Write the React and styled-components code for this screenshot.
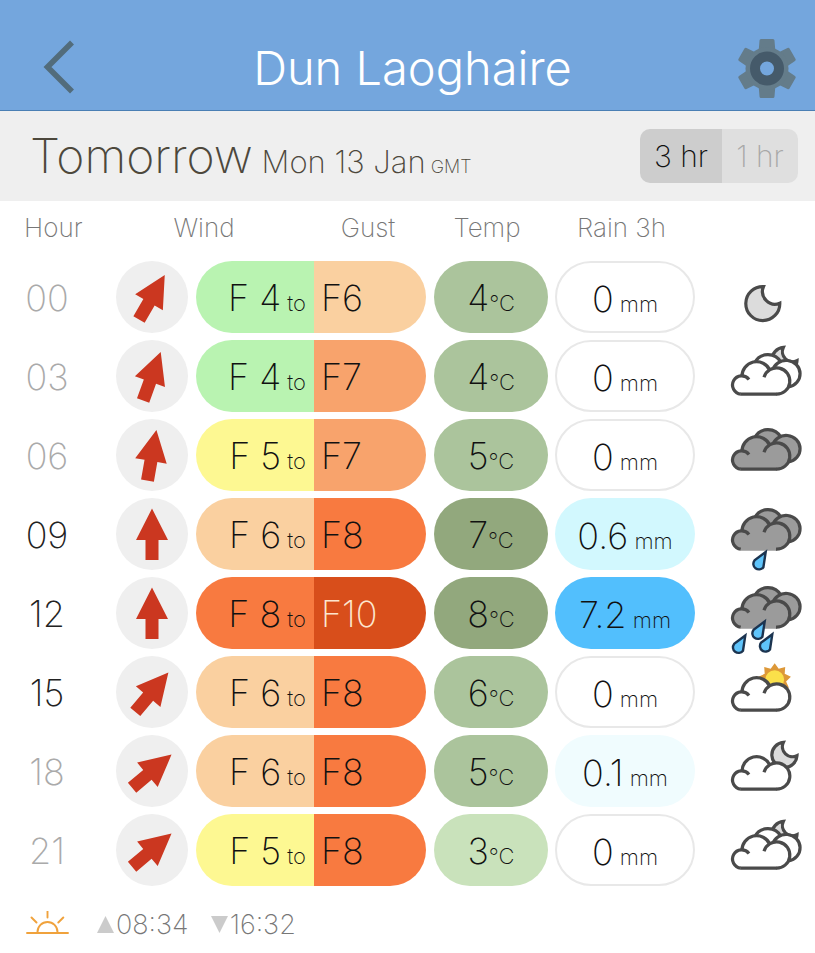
import React, { useState } from "react";
import styled, { createGlobalStyle } from "styled-components";

const WIND_COLORS = {
  4: "#b9f3b1",
  5: "#fdf892",
  6: "#fad0a0",
  7: "#f8a36c",
  8: "#f87a40",
  10: "#d84e1b",
};

const hours = [
  { hour: "00", angle: 30, wind: 4, gust: 6, temp: 4, tempColor: "#abc49c", rain: "0", sky: "moon" },
  { hour: "03", angle: 20, wind: 4, gust: 7, temp: 4, tempColor: "#abc49c", rain: "0", sky: "cloudsMoon" },
  { hour: "06", angle: 10, wind: 5, gust: 7, temp: 5, tempColor: "#abc49c", rain: "0", sky: "overcast" },
  { hour: "09", day: true, angle: 0, wind: 6, gust: 8, temp: 7, tempColor: "#92a87d", rain: "0.6", rainColor: "#d2f8fe", sky: "lightRain" },
  { hour: "12", day: true, angle: 0, wind: 8, gust: 10, temp: 8, tempColor: "#92a87d", rain: "7.2", rainColor: "#52bffd", sky: "heavyRain" },
  { hour: "15", day: true, angle: 40, wind: 6, gust: 8, temp: 6, tempColor: "#abc49c", rain: "0", sky: "cloudSun" },
  { hour: "18", angle: 50, wind: 6, gust: 8, temp: 5, tempColor: "#abc49c", rain: "0.1", rainColor: "#f0fcfe", sky: "cloudMoon" },
  { hour: "21", angle: 50, wind: 5, gust: 8, temp: 3, tempColor: "#c9e2bb", rain: "0", sky: "cloudsMoon" },
];

const INK = "#4a4a4a";

const FrontCloud = ({ fill = "#fff", open }) => (
  <g>
    <path
      d="M12 15A14.5 14.5 0 0 1 40 9A13.2 13.2 0 1 1 46 33.2H10.8A9.2 9.2 0 0 1 12 15Z"
      fill={fill}
      stroke="none"
    />
    {open && <path d="M10.8 30H47V34.8H10.8Z" fill={fill} stroke="none" />}
    <path d="M12 16A14.6 14.6 0 0 1 40 9.5" />
    <path d="M19 18.4A9.2 9.2 0 1 0 10.8 33.2" />
    <path d="M46 33.2A13.2 13.2 0 1 0 34 16.2" />
    {!open && <path d="M10.5 33.2H46.5" />}
  </g>
);

const BackCloud = ({ fill = "#fff" }) => (
  <g>
    <path
      d="M24 3A14.5 14.5 0 0 1 51 0.8L50 20H26Z"
      fill={fill}
      stroke="none"
    />
    <circle cx="55.8" cy="13.4" r="13.4" fill={fill} stroke="none" />
    <path d="M24.5 2.2A14.8 14.8 0 0 1 51 1.4" />
    <path d="M42.5 9.5A14 13.4 0 1 1 58.5 26" />
  </g>
);

const SmallMoon = () => (
  <path d="M53.4 -13.6A12.6 12.6 0 1 0 67 -0.4A10 10 0 0 1 53.4 -13.6Z" fill="#dcdcdc" />
);

const Drop = ({ x, y }) => (
  <path
    d="M-1 2L-12.2 10.4A5.6 5.6 0 1 0 -3.3 17.2Z"
    transform={`translate(${x} ${y})`}
    fill="#5fc4fb"
    stroke="#1c3450"
    strokeWidth="2.4"
  />
);

const sunPoints = Array.from({ length: 18 }, (_, i) => {
  const r = i % 2 ? 11.6 : 16.4;
  const a = (i * Math.PI) / 9;
  return `${(44.7 + r * Math.sin(a)).toFixed(1)},${(2.6 - r * Math.cos(a)).toFixed(1)}`;
}).join(" ");

const skies = {
  moon: {
    label: "Clear night",
    y: 0,
    art: <path d="M33.5 25.6A17 17 0 1 0 49.8 42.2A12.6 12.6 0 0 1 33.5 25.6Z" fill="#dcdcdc" />,
  },
  cloudsMoon: {
    label: "Cloudy with moon",
    y: 21,
    art: (
      <>
        <SmallMoon />
        <BackCloud />
        <FrontCloud />
      </>
    ),
  },
  overcast: {
    label: "Overcast",
    y: 17,
    art: (
      <>
        <BackCloud fill="#9b9b9b" />
        <FrontCloud fill="#9b9b9b" />
      </>
    ),
  },
  lightRain: {
    label: "Light rain",
    y: 18,
    art: (
      <>
        <BackCloud fill="#9b9b9b" />
        <FrontCloud fill="#9b9b9b" open />
        <Drop x={36.7} y={34} />
      </>
    ),
  },
  heavyRain: {
    label: "Heavy rain",
    y: 17,
    art: (
      <>
        <BackCloud fill="#9b9b9b" />
        <FrontCloud fill="#9b9b9b" open />
        <Drop x={35.7} y={25.5} />
        <Drop x={16.3} y={39.5} />
        <Drop x={43.3} y={38.2} />
      </>
    ),
  },
  cloudSun: {
    label: "Sun and cloud",
    y: 21,
    art: (
      <>
        <polygon points={sunPoints} fill="#dd9838" stroke="none" />
        <circle cx="44.7" cy="2.6" r="9.4" fill="#fbe04a" stroke="none" />
        <FrontCloud />
      </>
    ),
  },
  cloudMoon: {
    label: "Cloud and moon",
    y: 21,
    art: (
      <>
        <SmallMoon />
        <FrontCloud />
      </>
    ),
  },
};

const Sky = ({ name }) => (
  <SkySvg viewBox="0 0 72 72" role="img" aria-label={skies[name].label}>
    <g
      transform={`translate(0 ${skies[name].y})`}
      fill="none"
      stroke={INK}
      strokeWidth="3.2"
    >
      {skies[name].art}
    </g>
  </SkySvg>
);

const App = () => {
  const [step, setStep] = useState(3);

  return (
    <Page>
      <GlobalStyle />
      <TopBar>
        <IconButton aria-label="Back">
          <svg width="60" height="60" viewBox="0 0 60 60">
            <path d="M44 4.5L19.5 29L44 53.5" fill="none" stroke="#526c7b" strokeWidth="5.6" />
          </svg>
        </IconButton>
        <Title>Dun Laoghaire</Title>
        <IconButton aria-label="Settings">
          <svg width="60" height="60" viewBox="0 0 60 60">
            <g fill="#647c8a">
              {[0, 60, 120, 180, 240, 300].map((a) => (
                <path
                  key={a}
                  d="M21.5 15L22.5 2.5Q22.6 1 24 1H36Q37.4 1 37.5 2.5L38.5 15Z"
                  transform={`rotate(${a} 30 30.5)`}
                />
              ))}
              <circle cx="30" cy="30.5" r="21.5" />
            </g>
            <circle cx="30" cy="30.5" r="12" fill="#74a6dd" />
            <circle cx="30" cy="30.5" r="12" fill="none" stroke="#455a6a" strokeWidth="10" />
          </svg>
        </IconButton>
      </TopBar>

      <DayBar>
        <Day>
          Tomorrow
          <DayDate> Mon 13 Jan</DayDate>
          <Zone> GMT</Zone>
        </Day>
        <Toggle>
          <ToggleButton $wide $active={step === 3} aria-pressed={step === 3} onClick={() => setStep(3)}>
            3 hr
          </ToggleButton>
          <ToggleButton $active={step === 1} aria-pressed={step === 1} onClick={() => setStep(1)}>
            1 hr
          </ToggleButton>
        </Toggle>
      </DayBar>

      <Forecast>
        <colgroup>
          <Col $w={112} />
          <Col $w={80} />
          <Col $w={122} />
          <Col $w={116} />
          <Col $w={122} />
          <Col $w={147} />
          <Col $w={116} />
        </colgroup>
        <thead>
          <tr>
            <HourHead scope="col">Hour</HourHead>
            <WindHead scope="col" colSpan={2}>Wind</WindHead>
            <Head scope="col">Gust</Head>
            <Head scope="col">Temp</Head>
            <Head scope="col">Rain 3h</Head>
            <Head as="td" />
          </tr>
        </thead>
        <tbody>
          {hours.map((h) => (
            <tr key={h.hour}>
              <HourCell scope="row" $day={h.day}>{h.hour}</HourCell>
              <Cell>
                <Disc>
                  <svg width="72" height="72" viewBox="0 0 72 72">
                    <path
                      d="M36 10.5L52 42H42.5V62H29.5V42H20Z"
                      fill="#cb3720"
                      transform={`rotate(${h.angle} 36 36)`}
                    />
                  </svg>
                </Disc>
              </Cell>
              <WindCell>
                <WindPill $color={WIND_COLORS[h.wind]}>
                  F {h.wind}
                  <Unit> to</Unit>
                </WindPill>
              </WindCell>
              <GustCell>
                <GustPill $color={WIND_COLORS[h.gust]} $light={h.gust >= 10}>
                  F{h.gust}
                </GustPill>
              </GustCell>
              <Cell>
                <Pill $color={h.tempColor}>
                  {h.temp}
                  <Unit>°C</Unit>
                </Pill>
              </Cell>
              <RainCell>
                <RainPill $color={h.rainColor}>
                  {h.rain}
                  <Unit> mm</Unit>
                </RainPill>
              </RainCell>
              <SkyCell>
                <Sky name={h.sky} />
              </SkyCell>
            </tr>
          ))}
        </tbody>
      </Forecast>

      <SunBar>
        <svg width="44" height="28" viewBox="0 0 44 28" role="img" aria-label="Sunrise and sunset">
          <g fill="none" stroke="#f0a23c" strokeWidth="1.9" strokeLinecap="round">
            <path d="M2 22H43" />
            <path d="M12.5 21A10 10 0 0 1 32.5 21" />
            <path d="M22.5 0V6.5M6.5 6.5L11.5 11.5M38.3 6.5L33.3 11.5" />
          </g>
        </svg>
        <SunTimes>
          <SunTime>
            <svg width="17" height="18" viewBox="0 0 17 18">
              <path d="M8.5 0L17 17H0Z" fill="#cbcbcb" />
            </svg>
            08:34
          </SunTime>
          <SunTime>
            <svg width="17" height="18" viewBox="0 0 17 18">
              <path d="M0 0H17L8.5 17Z" fill="#cbcbcb" />
            </svg>
            16:32
          </SunTime>
        </SunTimes>
      </SunBar>
    </Page>
  );
};

const GlobalStyle = createGlobalStyle`
  *, *::before, *::after {
    box-sizing: border-box;
  }
  body {
    margin: 0;
    background: #fff;
    font-family: Inter, "Open Sans", sans-serif;
    font-weight: 200;
    color: #111;
  }
  button {
    font: inherit;
    border: none;
    padding: 0;
    cursor: pointer;
  }
`;

const Page = styled.main`
  width: 100%;
`;

const TopBar = styled.header`
  display: flex;
  align-items: center;
  justify-content: space-between;
  padding: 38px 18px 12px 28px;
  background: #74a6dd;
  border-bottom: 1px solid #4a7fb4;
`;

const IconButton = styled.button`
  display: flex;
  background: none;
`;

const Title = styled.h1`
  margin: 0;
  font-size: 47px;
  font-weight: 300;
  line-height: 60px;
  color: #fff;
`;

const DayBar = styled.section`
  display: flex;
  align-items: center;
  justify-content: space-between;
  padding: 14px 17px 14px 30px;
  background: #efefef;
`;

const Day = styled.h2`
  margin: 0;
  font-size: 48px;
  font-weight: 200;
  line-height: 62px;
  color: #4d483c;
`;

const DayDate = styled.span`
  font-size: 31px;
  line-height: 1;
`;

const Zone = styled.span`
  font-size: 18px;
  line-height: 1;
`;

const Toggle = styled.div`
  display: flex;
  height: 54px;
  border-radius: 10px;
  overflow: hidden;
`;

const ToggleButton = styled.button`
  width: ${(props) => (props.$wide ? "82px" : "76px")};
  font-size: 30px;
  background: ${(props) => (props.$active ? "#cdcdcd" : "#dfdfdf")};
  color: ${(props) => (props.$active ? "#111" : "#a8a8a8")};
`;

const Forecast = styled.table`
  width: 100%;
  table-layout: fixed;
  border-collapse: collapse;
`;

const Col = styled.col`
  width: ${(props) => props.$w}px;
`;

const Head = styled.th`
  height: 60px;
  padding: 10px 8px 0 0;
  vertical-align: top;
  font-size: 26px;
  font-weight: 200;
  line-height: 34px;
  text-align: center;
  color: #777;
`;

const HourHead = styled(Head)`
  padding-left: 24px;
  text-align: left;
`;

const WindHead = styled(Head)`
  padding-right: 18px;
`;

const Cell = styled.td`
  padding: 0 4px 7px;
`;

const HourCell = styled.th`
  padding: 0 18px 5px 0;
  font-size: 36px;
  font-weight: 200;
  line-height: 72px;
  color: ${(props) => (props.$day ? "#222" : "#aaa")};
`;

const WindCell = styled(Cell)`
  padding-right: 0;
`;

const GustCell = styled(Cell)`
  padding-left: 0;
`;

const RainCell = styled(Cell)`
  padding-left: 3px;
`;

const SkyCell = styled(Cell)`
  padding-left: 22px;
`;

const Disc = styled.div`
  display: flex;
  justify-content: center;
  width: 72px;
  height: 72px;
  margin: 0 auto;
  border-radius: 50%;
  background: #efefef;
`;

const Pill = styled.div`
  height: 72px;
  border-radius: 36px;
  background: ${(props) => props.$color};
  font-size: 36px;
  line-height: 74px;
  text-align: center;
  white-space: nowrap;
`;

const WindPill = styled(Pill)`
  padding-right: 8px;
  border-radius: 36px 0 0 36px;
  text-align: right;
`;

const GustPill = styled(Pill)`
  padding-left: 7px;
  border-radius: 0 36px 36px 0;
  text-align: left;
  color: ${(props) => (props.$light ? "#fde6cf" : "#111")};
`;

const RainPill = styled(Pill)`
  border: 2px solid ${(props) => (props.$color ? "transparent" : "#e8e8e8")};
  line-height: 72px;
`;

const Unit = styled.small`
  font-size: 22px;
`;

const SkySvg = styled.svg`
  display: block;
  width: 72px;
  height: 72px;
  margin: 0 auto;
  overflow: visible;
`;

const SunBar = styled.footer`
  display: flex;
  align-items: center;
  gap: 28px;
  padding: 16px 25px;
`;

const SunTimes = styled.div`
  display: flex;
  gap: 22px;
`;

const SunTime = styled.span`
  display: flex;
  align-items: center;
  gap: 2px;
  font-size: 27px;
  line-height: 32px;
  color: #777;
`;

export default App;
